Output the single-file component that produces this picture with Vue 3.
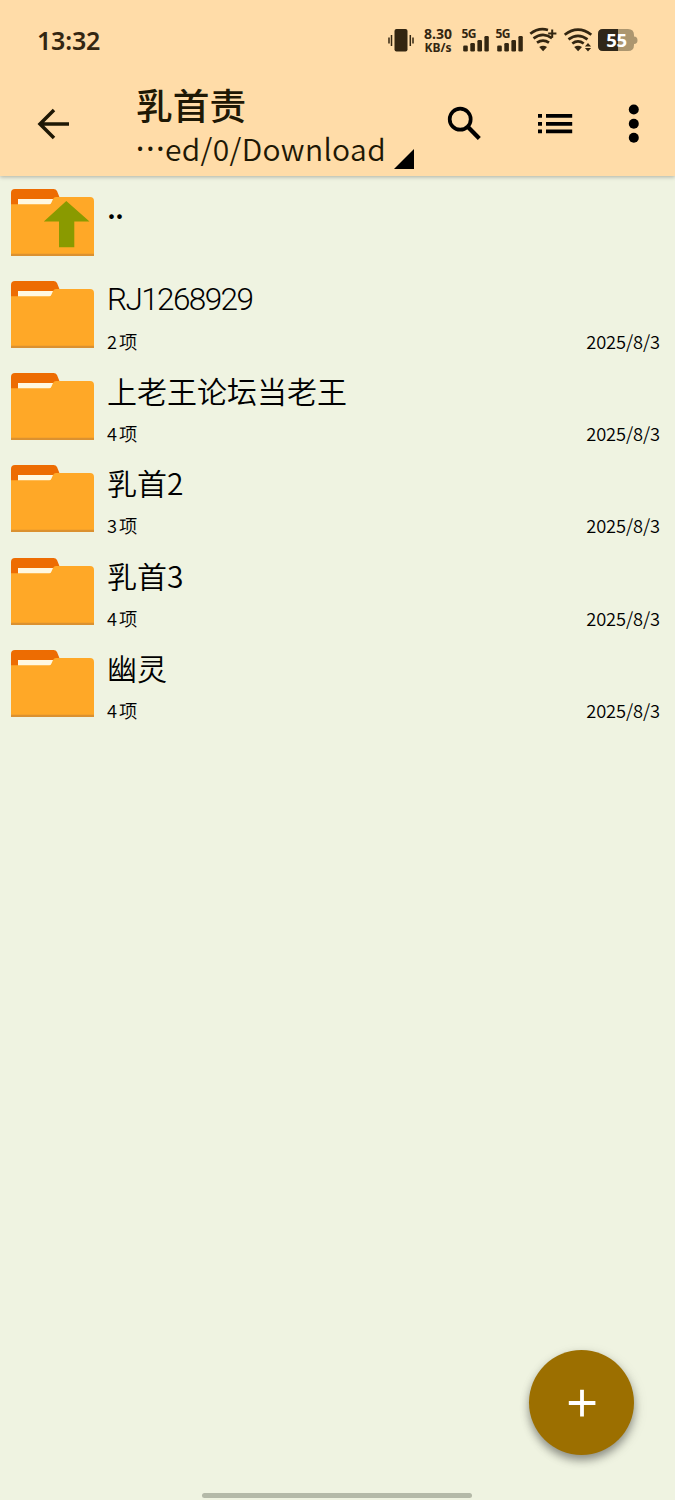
<script setup>
const rows = [
  { name: '..', up: true },
  { name: 'RJ1268929', count: 2, latin: true },
  { name: '上老王论坛当老王', count: 4 },
  { name: '乳首2', count: 3 },
  { name: '乳首3', count: 4 },
  { name: '幽灵', count: 4 },
]
</script>

<template>
  <div class="screen">
    <header class="top">
      <div class="status">
        <span class="time">13:32</span>
        <div class="speed"><span class="rate">8.30</span><span>KB/s</span></div>
        <svg class="sys" width="675" height="80" viewBox="0 0 675 80" fill="#332611">
          <rect x="394.5" y="29" width="13" height="22.5" rx="2" />
          <path d="M391.5 35v11M389 37.5v6M410.3 35v11M413 37.5v6" stroke="#332611" stroke-width="1.5" />
          <g v-for="x in [0, 34]" :key="x" :transform="`translate(${x} 0)`">
            <text x="461.5" y="37.8" class="net">5G</text>
            <rect x="463.2" y="45.5" width="4.6" height="6" rx="1.3" />
            <rect x="470.3" y="43" width="4.6" height="8.5" rx="1.3" />
            <rect x="477.4" y="40" width="4.6" height="11.5" rx="1.3" />
            <rect x="484.4" y="36" width="4.4" height="15.5" rx="1.3" />
          </g>
          <g fill="none" stroke="#332611" stroke-width="2.7">
            <path d="M530.3 33.8Q538.5 27.3 548 30M533.5 38.4Q543 31.5 552 38.2M537 42.7Q543 38.4 549 42.7" />
            <path d="M552.2 29.5v8.2M548.2 33.6h8.2" stroke-width="2" />
            <path d="M564.7 34.8Q578 24.5 591.3 34.8M568.5 39.4Q578 32.2 587.5 39.4M572.3 43.5Q578 39.3 583.7 43.5" />
          </g>
          <path d="M539.2 47.1q3.8-2.6 7.8 0l-3.9 4.2zM574.2 47.1q3.8-2.6 7.8 0l-3.9 4.2zM588 43l3.1 3.6h-6.2zM588 51.5l3.1-3.6h-6.2z" />
          <path d="M603 29h25q6 0 6 6v1.5q3.5 0 3.5 3.8t-3.5 3.8v1q0 6-6 6h-25q-5 0-5-5v-12q0-5 5-5z" fill="#ac966f" />
          <path d="M603 29h15v22.1h-15q-5 0-5-5v-12q0-5 5-5z" fill="#302719" />
          <text x="616.5" y="47" class="battery">55</text>
        </svg>
      </div>
      <div class="bar">
        <svg class="back" width="34" height="34" viewBox="0 0 34 34" fill="none" stroke="#1e1805" stroke-width="3.5">
          <path d="M33 17H5M18 3L4 17l14 14" />
        </svg>
        <div class="heading">
          <h1>乳首责</h1>
          <div class="path"><span class="dots">···</span><span class="dir">ed/0/Download</span>
            <svg width="20" height="20" viewBox="0 0 20 20"><path d="M20 0v20H0z" /></svg>
          </div>
        </div>
        <svg class="actions" width="215" height="60" viewBox="0 0 215 60">
          <circle cx="20.2" cy="25.2" r="10.5" fill="none" stroke="#000" stroke-width="3.7" />
          <path d="M28 33L39.3 44.4" stroke="#000" stroke-width="4.3" />
          <path d="M98 20h4v3.8h-4zM98 28h4v3.8h-4zM98 35.5h4v3.8h-4zM106 20h26.2v3.8H106zM106 28h26.2v3.8H106zM106 35.5h26.2v3.8H106z" />
          <circle cx="193.8" cy="15.5" r="5" /><circle cx="193.8" cy="29.7" r="5" /><circle cx="193.8" cy="43.8" r="5" />
        </svg>
      </div>
    </header>

    <main>
      <div v-for="row in rows" :key="row.name" class="row">
        <svg class="folder" width="83" height="68" viewBox="0 0 83 68">
          <path d="M0 18V4Q0 0 4 0H42.5Q45 0 46 2L50 12V18z" fill="#ed6c02" />
          <path d="M7 10H43L39 18H7z" fill="#fff8e1" />
          <path d="M0 15.3H38.5Q40 15.3 40.7 13L42 10Q43 8 45 8H79Q83 8 83 12V67H0z" fill="#ffa827" />
          <path d="M0 64.7H83V67H0z" fill="#db9130" />
          <path v-if="row.up" d="M55.3 12L78.5 32.5H63.3V58.3H48V32.5H32.8z" fill="#8a9a00" />
        </svg>
        <div class="info">
          <div class="name" :class="{ parent: row.up, latin: row.latin }">{{ row.name }}</div>
          <div v-if="!row.up" class="meta">
            <span class="count">{{ row.count }}<i>项</i></span>
            <span class="date">2025/8/3</span>
          </div>
        </div>
      </div>
    </main>

    <button class="fab" aria-label="+">
      <svg width="28" height="28" viewBox="0 0 28 28"><path d="M14 .8v26.6M.8 14h26.6" stroke="#fff" stroke-width="3.8" /></svg>
    </button>
    <div class="handle"></div>
  </div>
</template>

<style>
html, body { margin: 0; background: #eff3e1; }
</style>

<style scoped>
.screen {
  position: relative;
  width: 675px;
  height: 1500px;
  overflow: hidden;
  background: #eff3e1;
  color: #000;
  font-family: "Noto Sans CJK SC", sans-serif;
}
.top {
  height: 176px;
  margin-bottom: 1px;
  background: #ffdca8;
  box-shadow: 0 1px 4px rgba(0, 0, 0, .28);
  position: relative;
}
.status { position: relative; height: 80px; color: #332611; }
.time {
  display: block;
  padding: 22px 0 0 37px;
  font: 600 25px/36px "Noto Sans", sans-serif;
  letter-spacing: -.2px;
}
.speed {
  position: absolute;
  left: 418px;
  top: 26px;
  width: 40px;
  display: flex;
  flex-direction: column;
  align-items: center;
  font: 700 12px/13px "Noto Sans", sans-serif;
}
.rate { font-size: 14px; line-height: 15px; }
.sys { position: absolute; left: 0; top: 0; }
.net { font: 700 12px "Noto Sans", sans-serif; letter-spacing: -.5px; }
.battery { font: 700 18.5px "Noto Sans", sans-serif; fill: #fff; text-anchor: middle; letter-spacing: -.3px; }
.bar { display: flex; height: 96px; }
.back { margin: 27px 0 0 36px; flex: none; }
.heading { margin-left: 66px; width: 304px; flex: none; color: #1e1805; }
h1 { margin: 2px 0 0; font-size: 36.7px; line-height: 44px; font-weight: 500; white-space: nowrap; }
.path { display: flex; height: 40px; margin-top: 2px; font-size: 30px; line-height: 41px; white-space: nowrap; font-weight: 350; }
.path svg { margin: 20.5px 0 0 6.5px; flex: none; }
.dots { width: 29px; flex: none; font-family: "Noto Sans", sans-serif; font-weight: 500; letter-spacing: 2px; }
.dir { width: 222px; flex: none; letter-spacing: .35px; }
.actions { margin-top: 14px; flex: none; }
.row { display: flex; height: 92.15px; }
.folder { margin: 12px 0 0 11px; flex: none; }
.info { flex: 1; padding: 6px 15px 0 13px; }
.name { font-size: 30px; line-height: 46px; height: 46px; white-space: nowrap; font-weight: 350; }
.latin { font-family: Roboto, sans-serif; font-size: 31.5px; font-weight: 300; letter-spacing: -1.6px; line-height: 50px; }
.parent { font-weight: 500; letter-spacing: -1px; }
.meta { display: flex; justify-content: space-between; padding-top: 7px; font-size: 18.3px; line-height: 26px; font-weight: 350; }
.count { display: flex; gap: 2px; }
.count i { font-style: normal; }
.date { letter-spacing: -.1px; }
.fab {
  position: absolute;
  left: 529px;
  top: 1350px;
  width: 105px;
  height: 105px;
  border: 0;
  padding: 0;
  border-radius: 50%;
  background: #9c6f00;
  display: flex;
  align-items: center;
  justify-content: center;
  box-shadow: 0 5px 9px rgba(0, 0, 0, .36), 2px 4px 14px rgba(0, 0, 0, .1);
}
.handle {
  position: absolute;
  left: 202px;
  top: 1493px;
  width: 270px;
  height: 5px;
  border-radius: 3px;
  background: #b4b9a8;
}
</style>
